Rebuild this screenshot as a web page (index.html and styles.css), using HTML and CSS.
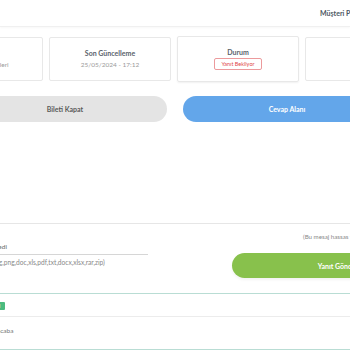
FILE: index.html
```html
<!DOCTYPE html>
<html>
<head>
  <title>Destek Talebi</title>
  <link rel="stylesheet" href="styles.css">
</head>
<body>
  <div class="topbar">
    <span class="topbar-title">Müşteri Paneli</span>
  </div>

  <div class="page">
    <div class="info-cards">
      <div class="info-card">
        <div class="info-title">Departman</div>
        <div class="info-value">Müşteri Hizmetleri</div>
      </div>
      <div class="info-card">
        <div class="info-title">Son Güncelleme</div>
        <div class="info-value">25/05/2024 - 17:12</div>
      </div>
      <div class="info-card active">
        <div class="info-title">Durum</div>
        <span class="status-badge">Yanıt Bekliyor</span>
      </div>
      <div class="info-card">
        <div class="info-title">Öncelik</div>
        <div class="info-value">Normal</div>
      </div>
    </div>

    <div class="actions">
      <button class="btn btn-gray">Bileti Kapat</button>
      <button class="btn btn-blue">Cevap Alanı</button>
    </div>

    <div class="reply">
      <div class="reply-left">
        <div class="file-row">Dosya seçilmedi</div>
        <div class="file-types">(jpg,jpeg,png,doc,xls,pdf,txt,docx,xlsx,rar,zip)</div>
      </div>
      <div class="reply-right">
        <div class="reply-note">(Bu mesaj hassas veri içerir)</div>
        <button class="btn btn-green">Yanıt Gönder</button>
      </div>
    </div>

    <div class="message">
      <div class="message-head">
        <span class="user-badge">Müşteri</span>
      </div>
      <div class="message-body">Ne zaman acaba</div>
    </div>
  </div>
</body>
</html>
```

FILE: styles.css
```css
body {
  margin: 0;
  font-family: Lato, "Open Sans", sans-serif;
  background-color: #fff;
  overflow: hidden;
}

.topbar {
  height: 26px;
  display: flex;
  align-items: center;
  padding-left: 320px;
  white-space: nowrap;
  border-bottom: 1px solid #f0f0f0;
  box-shadow: 0 1px 2px rgba(0, 0, 0, 0.03);
}

.topbar-title {
  font-size: 7px;
  font-weight: bold;
  color: #4c5661;
}

.page {
  width: 506px;
  margin-left: -79px;
}

.info-cards {
  display: grid;
  grid-template-columns: repeat(4, 122px);
  gap: 6px;
  margin-top: 9px;
  align-items: center;
}

.info-card {
  height: 42px;
  border: 1px solid #e8e8e8;
  border-radius: 2px;
  display: flex;
  flex-direction: column;
  align-items: center;
  justify-content: center;
  gap: 2px;
}

.info-card.active {
  height: 44px;
  gap: 1px;
  box-shadow: 0 1px 2px rgba(0, 0, 0, 0.06);
}

.info-title {
  font-size: 7px;
  line-height: 9px;
  font-weight: bold;
  color: #5a626b;
}

.info-value {
  font-size: 6.5px;
  line-height: 9px;
  color: #9a9a9a;
}

.status-badge {
  font-size: 5.5px;
  line-height: 10px;
  padding: 0 6px;
  color: #e0464a;
  border: 1px solid #ec9a9c;
  border-radius: 2px;
}

.actions {
  display: grid;
  grid-template-columns: 204px 208px;
  gap: 16px;
  padding-left: 42px;
  margin-top: 14px;
}

.btn {
  height: 26px;
  border: none;
  border-radius: 13px;
  font-family: Lato, "Open Sans", sans-serif;
  font-size: 7px;
  font-weight: bold;
  cursor: pointer;
}

.btn-gray {
  background-color: #e4e4e4;
  color: #5a5a5a;
}

.btn-blue {
  background-color: #63a6ea;
  color: #fff;
}

.reply {
  display: flex;
  gap: 84px;
  margin-top: 101px;
  margin-left: -200px;
  padding-left: 257px;
  width: 600px;
  border-top: 1px solid #e6e6e6;
}

.reply-left {
  width: 170px;
  padding-top: 19px;
}

.file-row {
  font-size: 6.5px;
  line-height: 8px;
  color: #666;
  margin-left: -60px;
  padding-bottom: 3px;
  padding-left: 43px;
  border-bottom: 1px solid #d6d6d6;
}

.file-types {
  font-size: 6.6px;
  line-height: 7px;
  color: #888;
  margin-top: 4px;
  white-space: nowrap;
}

.reply-right {
  width: 212px;
  padding-top: 9px;
}

.reply-note {
  font-size: 6.2px;
  line-height: 7px;
  color: #888;
  padding-left: 71px;
  white-space: nowrap;
}

.btn-green {
  width: 212px;
  height: 25px;
  margin-top: 13px;
  background-color: #88c14c;
  color: #fff;
  box-shadow: 0 2px 3px rgba(0, 0, 0, 0.05);
}

.message {
  margin-top: 15px;
  margin-left: -200px;
  padding-left: 257px;
  width: 600px;
  border-top: 1px solid #b9ddd4;
  border-bottom: 1px solid #b9ddd4;
}

.message-head {
  display: flex;
  padding: 8px 0 6px;
  margin-left: -257px;
  padding-left: 257px;
  border-bottom: 1px solid #ececec;
}

.user-badge {
  font-size: 5px;
  line-height: 8px;
  padding: 0 5px;
  font-weight: bold;
  color: #fff;
  background-color: #4cbb7f;
  border-radius: 1px;
}

.message-body {
  font-size: 6.5px;
  line-height: 8px;
  color: #777;
  padding: 10px 0 14px;
  margin-left: -11px;
}
```
